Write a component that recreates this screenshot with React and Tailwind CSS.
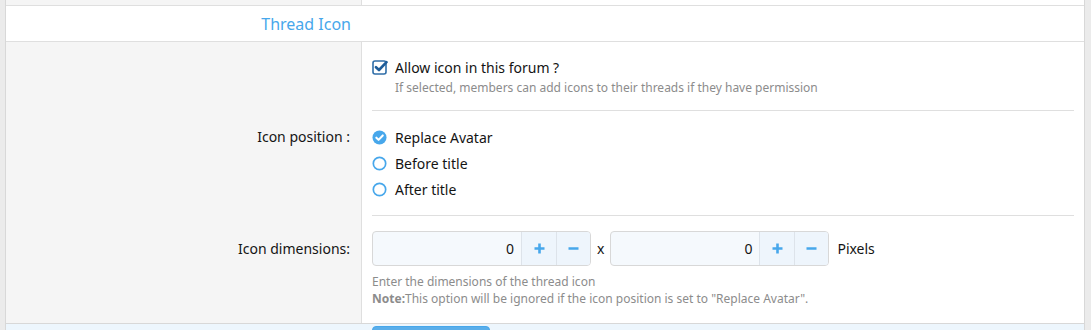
const FONT = { fontFamily: '"Noto Sans", "Open Sans", sans-serif' }

function CheckSquare() {
  return (
    <svg width="16" height="16" viewBox="0 0 16 16" className="shrink-0">
      <rect x="1" y="2" width="13" height="13" rx="2" fill="none" stroke="#2f6ea8" strokeWidth="1.6" />
      <path d="M4 8.2 L7 11 L14.5 3.2" fill="none" stroke="#1d5c99" strokeWidth="2.6" strokeLinecap="round" strokeLinejoin="round" />
    </svg>
  )
}

function Radio({ checked }) {
  if (checked) {
    return (
      <svg width="15" height="15" viewBox="0 0 16 16" className="shrink-0">
        <circle cx="8" cy="8" r="7.5" fill="#47a7eb" />
        <path d="M4.6 8.2 L7 10.5 L11.5 5.8" fill="none" stroke="#fff" strokeWidth="2.2" strokeLinecap="round" strokeLinejoin="round" />
      </svg>
    )
  }
  return (
    <svg width="15" height="15" viewBox="0 0 16 16" className="shrink-0">
      <circle cx="8" cy="8" r="6.6" fill="#fff" stroke="#47a7eb" strokeWidth="1.8" />
    </svg>
  )
}

function Spinner() {
  return (
    <div className="flex h-[35px] w-[219px] rounded border border-[#d8d8d8] bg-[#f5f9fd] overflow-hidden">
      <div className="flex-1 flex items-center justify-end pr-[7px] text-[14px] text-[#141414]">0</div>
      <div className="w-[35px] flex items-center justify-center border-l border-[#dde3ea] bg-[#eef5fc]">
        <svg width="11" height="11" viewBox="0 0 11 11"><path d="M5.5 0.5v10M0.5 5.5h10" stroke="#47a7eb" strokeWidth="2.6" /></svg>
      </div>
      <div className="w-[34px] flex items-center justify-center border-l border-[#dde3ea] bg-[#eef5fc]">
        <svg width="11" height="11" viewBox="0 0 11 11"><path d="M0.5 5.5h10" stroke="#47a7eb" strokeWidth="2.6" /></svg>
      </div>
    </div>
  )
}

export default function App() {
  const options = [
    { label: 'Replace Avatar', checked: true },
    { label: 'Before title', checked: false },
    { label: 'After title', checked: false },
  ]

  return (
    <div className="flex w-[1091px] h-[330px] overflow-hidden bg-[#ebebeb]" style={FONT}>
      <div className="w-[5px] shrink-0" />
      <div className="w-[1080px] shrink-0 border-x border-[#d8d8d8] bg-white flex flex-col">
        {/* previous row tail */}
        <div className="flex shrink-0 h-[6px] border-b border-[#dfdfdf]">
          <div className="w-[356px] border-r border-[#dfdfdf] bg-[#f5f5f5]" />
          <div className="flex-1" />
        </div>

        {/* Header */}
        <div className="flex shrink-0 h-[36px] border-b border-[#dfdfdf]">
          <div className="w-[356px] flex items-center justify-end pr-[11px] text-[16px] text-[#47a7eb]">Thread Icon</div>
        </div>

        {/* Allow icon */}
        <div className="flex shrink-0 h-[69px]">
          <div className="w-[356px] border-r border-[#dfdfdf] bg-[#f5f5f5]" />
          <div className="flex-1 pl-[10px] pr-[10px]">
            <div className="h-full border-b border-[#dfdfdf] pt-[15px]">
              <div className="flex items-center gap-[7px] h-[20px]">
                <CheckSquare />
                <span className="text-[14px] text-[#141414]">Allow icon in this forum ?</span>
              </div>
              <div className="pl-[23px] pt-[1px] text-[12px] leading-[19px] text-[#8c8c8c]">
                If selected, members can add icons to their threads if they have permission
              </div>
            </div>
          </div>
        </div>

        {/* Icon position */}
        <div className="flex shrink-0 h-[105px]">
          <div className="w-[356px] border-r border-[#dfdfdf] bg-[#f5f5f5] pt-[16px] pr-[11px] text-right text-[14px] text-[#141414] leading-[20px]">
            Icon position :
          </div>
          <div className="flex-1 pl-[10px] pr-[10px]">
            <div className="h-full border-b border-[#dfdfdf] pt-[16px] flex flex-col gap-[6px]">
              {options.map((o) => (
                <div key={o.label} className="flex items-center gap-[8px] h-[20px]">
                  <Radio checked={o.checked} />
                  <span className="text-[14px] text-[#141414]">{o.label}</span>
                </div>
              ))}
            </div>
          </div>
        </div>

        {/* Icon dimensions */}
        <div className="flex shrink-0 h-[108px] border-b border-[#d8d8d8]">
          <div className="w-[356px] border-r border-[#dfdfdf] bg-[#f5f5f5] pt-[23px] pr-[11px] text-right text-[14px] text-[#141414] leading-[20px]">
            Icon dimensions:
          </div>
          <div className="flex-1 pl-[10px] pt-[15px]">
            <div className="flex items-center">
              <Spinner />
              <span className="mx-[6px] text-[14px] text-[#141414]">x</span>
              <Spinner />
              <span className="ml-[8px] text-[14px] text-[#141414]">Pixels</span>
            </div>
            <div className="mt-[7px] text-[12px] leading-[17px] text-[#8c8c8c]">
              <div>Enter the dimensions of the thread icon</div>
              <div><b className="font-bold">Note:</b>This option will be ignored if the icon position is set to "Replace Avatar".</div>
            </div>
          </div>
        </div>

        {/* footer */}
        <div className="flex-1 bg-[#edf6fd] pl-[366px] pt-[2px]">
          <div className="w-[118px] h-[10px] rounded-t border border-[#47a7eb] bg-[#5aaeea]" />
        </div>
      </div>
    </div>
  )
}
